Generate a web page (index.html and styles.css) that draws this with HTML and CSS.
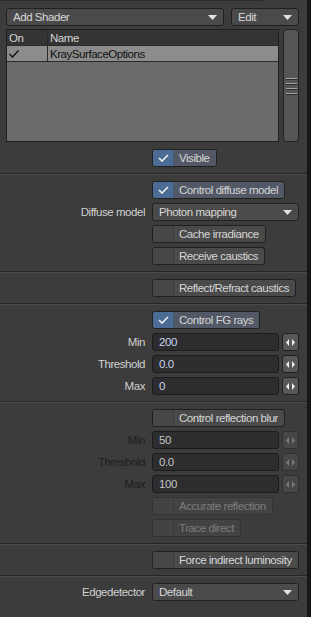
FILE: index.html
```html
<!DOCTYPE html>
<html lang="en">
<head>
  <meta charset="UTF-8">
  <title>Surface Shaders</title>
  <link rel="stylesheet" href="styles.css">
</head>
<body>
  <div class="app">
    <div class="panel">
      <div class="topline"></div>

      <section class="sec first">
        <div class="toprow">
          <div class="dropdown add">Add Shader<svg class="caret" width="9" height="5"><polygon points="0,0 9,0 4.5,5" /></svg></div>
          <div class="dropdown edit">Edit<svg class="caret" width="9" height="5"><polygon points="0,0 9,0 4.5,5" /></svg></div>
        </div>
        <div class="listrow">
          <div class="list">
            <div class="lrow head"><span class="c-on">On</span><span class="c-name">Name</span></div>
            <div class="lrow sel">
              <span class="c-on"><svg width="10" height="8"><path d="M0.5 4 L3.5 7 L9.5 0.5" /></svg></span>
              <span class="c-name">KraySurfaceOptions</span>
            </div>
          </div>
          <div class="scroll">
            <div class="grip"><i></i><i></i><i></i><i></i></div>
          </div>
        </div>
        <div class="row">
          <span class="lbl"></span>
          <div class="check on"><span class="box"><svg width="11" height="8"><path d="M1 4 L4 7 L10 1" /></svg></span><span class="txt">Visible</span></div>
        </div>
      </section>

      <section class="sec">
        <div class="row">
          <span class="lbl"></span>
          <div class="check on"><span class="box"><svg width="11" height="8"><path d="M1 4 L4 7 L10 1" /></svg></span><span class="txt">Control diffuse model</span></div>
        </div>
        <div class="row">
          <span class="lbl">Diffuse model</span>
          <div class="dropdown wide">Photon mapping<svg class="caret" width="9" height="5"><polygon points="0,0 9,0 4.5,5" /></svg></div>
        </div>
        <div class="row">
          <span class="lbl"></span>
          <div class="check"><span class="box"></span><span class="txt">Cache irradiance</span></div>
        </div>
        <div class="row">
          <span class="lbl"></span>
          <div class="check"><span class="box"></span><span class="txt">Receive caustics</span></div>
        </div>
      </section>

      <section class="sec">
        <div class="row">
          <span class="lbl"></span>
          <div class="check"><span class="box"></span><span class="txt">Reflect/Refract caustics</span></div>
        </div>
      </section>

      <section class="sec">
        <div class="row">
          <span class="lbl"></span>
          <div class="check on"><span class="box"><svg width="11" height="8"><path d="M1 4 L4 7 L10 1" /></svg></span><span class="txt">Control FG rays</span></div>
        </div>
        <div class="row">
          <span class="lbl">Min</span>
          <div class="field">200</div>
          <div class="spin"><svg width="9" height="7"><polygon points="3,0 3,7 0,3.5" /><polygon points="6,0 6,7 9,3.5" /></svg></div>
        </div>
        <div class="row">
          <span class="lbl">Threshold</span>
          <div class="field">0.0</div>
          <div class="spin"><svg width="9" height="7"><polygon points="3,0 3,7 0,3.5" /><polygon points="6,0 6,7 9,3.5" /></svg></div>
        </div>
        <div class="row">
          <span class="lbl">Max</span>
          <div class="field">0</div>
          <div class="spin"><svg width="9" height="7"><polygon points="3,0 3,7 0,3.5" /><polygon points="6,0 6,7 9,3.5" /></svg></div>
        </div>
      </section>

      <section class="sec">
        <div class="row">
          <span class="lbl"></span>
          <div class="check"><span class="box"></span><span class="txt">Control reflection blur</span></div>
        </div>
        <div class="row off">
          <span class="lbl">Min</span>
          <div class="field">50</div>
          <div class="spin"><svg width="9" height="7"><polygon points="3,0 3,7 0,3.5" /><polygon points="6,0 6,7 9,3.5" /></svg></div>
        </div>
        <div class="row off">
          <span class="lbl">Threshold</span>
          <div class="field">0.0</div>
          <div class="spin"><svg width="9" height="7"><polygon points="3,0 3,7 0,3.5" /><polygon points="6,0 6,7 9,3.5" /></svg></div>
        </div>
        <div class="row off">
          <span class="lbl">Max</span>
          <div class="field">100</div>
          <div class="spin"><svg width="9" height="7"><polygon points="3,0 3,7 0,3.5" /><polygon points="6,0 6,7 9,3.5" /></svg></div>
        </div>
        <div class="row off">
          <span class="lbl"></span>
          <div class="check"><span class="box"></span><span class="txt">Accurate reflection</span></div>
        </div>
        <div class="row off">
          <span class="lbl"></span>
          <div class="check"><span class="box"></span><span class="txt">Trace direct</span></div>
        </div>
      </section>

      <section class="sec">
        <div class="row">
          <span class="lbl"></span>
          <div class="check"><span class="box"></span><span class="txt">Force indirect luminosity</span></div>
        </div>
      </section>

      <section class="sec last">
        <div class="row">
          <span class="lbl">Edgedetector</span>
          <div class="dropdown wide">Default<svg class="caret" width="9" height="5"><polygon points="0,0 9,0 4.5,5" /></svg></div>
        </div>
      </section>
    </div>
    <div class="edge"></div>
  </div>
</body>
</html>
```

FILE: styles.css
```css
body {
  margin: 0;
  background: #3c3c3c;
  font-family: "Liberation Sans", Arial, sans-serif;
  font-size: 11.5px;
  letter-spacing: -0.45px;
  color: #d2d2d2;
}
.app {
  display: flex;
  height: 617px;
}
.panel {
  width: 307px;
  background: #3c3c3c;
}
.edge {
  flex: 1;
  background: #161616;
}
.topline {
  width: 263px;
  height: 1px;
  background: #2b2b2b;
}

/* sections */
.sec {
  padding: 6px 0;
  display: flex;
  flex-direction: column;
  gap: 4px;
  border-bottom: 1px solid #262626;
  box-shadow: 0 1px 0 #4b4b4b;
  margin-bottom: 1px;
}
.sec.first {
  padding-top: 7px;
  gap: 0;
}
.sec.last {
  border-bottom: none;
  box-shadow: none;
}

/* shader list */
.toprow {
  display: flex;
  gap: 7px;
  padding: 0 8px 0 6px;
}
.dropdown {
  display: flex;
  align-items: center;
  justify-content: space-between;
  height: 18px;
  box-sizing: border-box;
  padding: 0 6px;
  background: #4a4a4a;
  border: 1px solid #202020;
  border-radius: 3px;
  color: #d6d6d6;
  white-space: nowrap;
}
.dropdown.add {
  width: 218px;
}
.dropdown.edit {
  width: 68px;
}
.dropdown.wide {
  width: 147px;
}
.caret polygon {
  fill: #e2e2e2;
}
.listrow {
  display: flex;
  gap: 4px;
  padding: 3px 8px 0 6px;
  margin-bottom: 7px;
}
.list {
  width: 273px;
  height: 113px;
  box-sizing: border-box;
  background: #6b6b6b;
  border: 1px solid #1f1f1f;
}
.lrow {
  display: flex;
  height: 16px;
  align-items: center;
  box-sizing: border-box;
  border-bottom: 1px solid #2a2a2a;
}
.lrow.head {
  background: #343434;
  color: #d4d4d4;
}
.lrow.sel {
  background: #8c8c8c;
  color: #111;
}
.c-on {
  width: 38px;
  padding-left: 2px;
  height: 100%;
  display: flex;
  align-items: center;
  border-right: 1px solid #2a2a2a;
}
.c-name {
  padding-left: 2px;
}
.lrow.sel path {
  fill: none;
  stroke: #111;
  stroke-width: 1.4;
}
.scroll {
  width: 16px;
  height: 113px;
  box-sizing: border-box;
  background: #565656;
  border: 1px solid #202020;
  border-radius: 4px;
  display: flex;
  align-items: center;
  justify-content: center;
}
.grip {
  display: flex;
  flex-direction: column;
  gap: 4px;
}
.grip i {
  display: block;
  width: 11px;
  height: 1px;
  background: #a4a4a4;
  box-shadow: 0 1px 0 #2c2c2c;
}

/* rows */
.row {
  display: flex;
  align-items: center;
  height: 18px;
}
.lbl {
  width: 152px;
  flex: none;
  box-sizing: border-box;
  padding-right: 7px;
  text-align: right;
  color: #d0d0d0;
}
.check {
  display: flex;
  height: 18px;
  box-sizing: border-box;
  background: #4a4a4a;
  border: 1px solid #202020;
  border-radius: 3px;
  overflow: hidden;
  white-space: nowrap;
}
.check .box {
  width: 20px;
  flex: none;
  display: flex;
  align-items: center;
  justify-content: center;
  border-right: 1px solid #3a3a3a;
  background: #474747;
}
.check .txt {
  padding: 0 6px 0 5px;
  display: flex;
  align-items: center;
  color: #d6d6d6;
}
.check.on .box {
  background: #4b6c95;
  border-right-color: #3f5a7c;
}
.check.on .txt {
  background: #525865;
}
.check.on path {
  fill: none;
  stroke: #f0f0f0;
  stroke-width: 1.6;
}
.field {
  width: 127px;
  height: 18px;
  box-sizing: border-box;
  padding-left: 6px;
  display: flex;
  align-items: center;
  background: #2d2d2f;
  border: 1px solid #1b1b1b;
  border-radius: 3px;
  color: #c9d5ee;
}
.spin {
  width: 17px;
  height: 18px;
  margin-left: 3px;
  box-sizing: border-box;
  display: flex;
  align-items: center;
  justify-content: center;
  background: #585858;
  border: 1px solid #1f1f1f;
  border-radius: 3px;
}
.spin polygon {
  fill: #f0f0f0;
}

/* disabled rows */
.row.off .lbl {
  color: #1d1d1d;
}
.row.off .field {
  color: #c4c4c4;
}
.row.off .spin {
  background: #474747;
  border-color: #303030;
}
.row.off .spin polygon {
  fill: #7a7a7a;
}
.row.off .check {
  background: #434343;
  border-color: #333;
}
.row.off .check .box {
  background: #434343;
  border-right-color: #3a3a3a;
}
.row.off .check .txt {
  color: #7c7c7c;
}
```
